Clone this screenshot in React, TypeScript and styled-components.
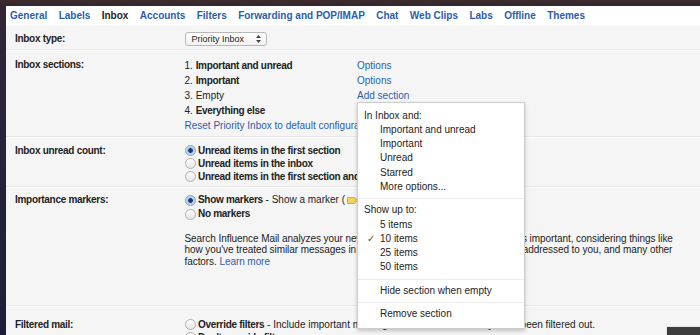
import React from 'react'
import styled, { createGlobalStyle } from 'styled-components'

const GlobalStyle = createGlobalStyle`
  html, body {
    margin: 0;
    padding: 0;
  }
  body {
    width: 700px;
    height: 335px;
    overflow: hidden;
    background: linear-gradient(180deg, #3d2b2b 0px, #332634 6px, #27233c 40%, #1d1f38 100%);
    font-family: 'Liberation Sans', Arial, sans-serif;
  }
`

const Page = styled.div`
  position: relative;
  height: 335px;
  padding: 6px 0 0 6px;
  box-sizing: border-box;
  overflow: hidden;
`

const Panel = styled.div`
  position: relative;
  height: 100%;
  background: #f5f5f5;
  font-size: 10px;
  color: #222;
`

const TabBar = styled.nav`
  display: flex;
  align-items: center;
  gap: 11.4px;
  height: 19px;
  padding-left: 4px;
  background: #fff;
`

const Tab = styled.span<{ $active?: boolean }>`
  font-weight: bold;
  white-space: nowrap;
  color: ${(p) => (p.$active ? '#222' : '#2a5db0')};
`

const Row = styled.div<{ $pt: number; $pb: number }>`
  display: grid;
  grid-template-columns: 169.5px 1fr;
  padding: ${(p) => p.$pt}px 0 ${(p) => p.$pb}px 9px;
  border-top: 1px solid #fbfbfb;
  border-bottom: 1px solid #e7e7e7;
`

const Label = styled.div`
  font-weight: bold;
  line-height: 14px;
  letter-spacing: -0.3px;
  white-space: nowrap;
`

const Strong = styled.b`
  letter-spacing: -0.3px;
`

const Select = styled.div`
  display: inline-flex;
  align-items: center;
  justify-content: space-between;
  width: 82px;
  height: 14px;
  box-sizing: border-box;
  padding: 0 5px 0 6px;
  border: 1px solid #b8b8b8;
  border-radius: 3px;
  background: linear-gradient(#fff, #f1f1f1);
  font-size: 9px;
  color: #222;
`

const SectionList = styled.div`
  display: grid;
  grid-template-columns: 172.5px auto;
  line-height: 15px;
  white-space: nowrap;
`

const Link = styled.a<{ $span?: boolean }>`
  color: #2a5db0;
  text-decoration: none;
  white-space: nowrap;
  ${(p) => (p.$span ? 'grid-column: 1 / -1;' : '')}
`

const RadioGroup = styled.div<{ $lh: number }>`
  display: flex;
  flex-direction: column;
  line-height: ${(p) => p.$lh}px;
  white-space: nowrap;
`

const RadioLine = styled.label`
  display: flex;
  align-items: center;
`

const RadioDot = styled.span<{ $checked?: boolean }>`
  flex: none;
  width: 11px;
  height: 11px;
  box-sizing: border-box;
  margin-right: 2.5px;
  border-radius: 50%;
  border: 1px solid ${(p) => (p.$checked ? '#8a9fc0' : '#b0b0b0')};
  background: ${(p) =>
    p.$checked
      ? 'radial-gradient(circle, #1c3a78 0 2px, #a9c6ec 2.6px, #e9f1fb 100%)'
      : 'linear-gradient(#fdfdfd, #e6e6e6)'};
`

const Paragraph = styled.p`
  margin: 11.75px 0 0;
  line-height: 11.5px;
  letter-spacing: -0.07px;
  white-space: nowrap;
`

const Marker = styled.svg`
  margin-left: 2px;
  vertical-align: -1px;
`

const Menu = styled.div`
  position: absolute;
  left: 351px;
  top: 96px;
  width: 168px;
  box-sizing: border-box;
  padding: 5.5px 0 6.5px;
  background: #fff;
  border: 1px solid rgba(0, 0, 0, 0.2);
  box-shadow: 0 2px 4px rgba(0, 0, 0, 0.2);
  line-height: 14.3px;
  color: #222;
`

const MenuItem = styled.div`
  display: flex;
  padding-left: 6px;
  white-space: nowrap;
`

const CheckSlot = styled.span`
  width: 16px;
  padding-left: 3px;
  box-sizing: border-box;
  color: #555;
`

const MenuSep = styled.div`
  height: 1px;
  margin: 4px 0;
  background: #ececec;
`

const ChatStub = styled.div`
  position: absolute;
  left: 666px;
  top: 326px;
  width: 40px;
  height: 20px;
  border: 1px solid #e6e6e6;
  background: #3d3d3d;
`

const SelectArrows = () => (
  <svg width="5" height="8" viewBox="0 0 5 8">
    <path d="M2.5 0 L5 3 H0 Z M2.5 8 L5 5 H0 Z" fill="#444" />
  </svg>
)

const tabs = [
  'General',
  'Labels',
  'Inbox',
  'Accounts',
  'Filters',
  'Forwarding and POP/IMAP',
  'Chat',
  'Web Clips',
  'Labs',
  'Offline',
  'Themes',
]

const sections = [
  { num: '1.', name: 'Important and unread', bold: true, link: 'Options' },
  { num: '2.', name: 'Important', bold: true, link: 'Options' },
  { num: '3.', name: 'Empty', bold: false, link: 'Add section' },
  { num: '4.', name: 'Everything else', bold: true, link: '' },
]

const filterItems = ['Important and unread', 'Important', 'Unread', 'Starred', 'More options...']
const countItems = ['5 items', '10 items', '25 items', '50 items']

const App = () => {
  return (
    <>
      <GlobalStyle />
      <Page>
        <Panel>
          <TabBar>
            {tabs.map((t) => (
              <Tab key={t} $active={t === 'Inbox'}>
                {t}
              </Tab>
            ))}
          </TabBar>

          <Row $pt={5.5} $pb={3.5}>
            <Label>Inbox type:</Label>
            <div>
              <Select>
                Priority Inbox <SelectArrows />
              </Select>
            </div>
          </Row>

          <Row $pt={6.5} $pb={3.5}>
            <Label>Inbox sections:</Label>
            <SectionList>
              {sections.map((s) => (
                <React.Fragment key={s.num}>
                  <span>
                    {s.num} {s.bold ? <Strong>{s.name}</Strong> : s.name}
                  </span>
                  <span>{s.link && <Link href="#">{s.link}</Link>}</span>
                </React.Fragment>
              ))}
              <Link href="#" $span>
                Reset Priority Inbox to default configuration
              </Link>
            </SectionList>
          </Row>

          <Row $pt={5.5} $pb={3.5}>
            <Label>Inbox unread count:</Label>
            <RadioGroup $lh={13}>
              <RadioLine>
                <RadioDot $checked />
                <Strong>Unread items in the first section</Strong>
              </RadioLine>
              <RadioLine>
                <RadioDot />
                <Strong>Unread items in the inbox</Strong>
              </RadioLine>
              <RadioLine>
                <RadioDot />
                <Strong>Unread items in the first section and the inbox</Strong>
              </RadioLine>
            </RadioGroup>
          </Row>

          <Row $pt={5} $pb={37.75}>
            <Label>Importance markers:</Label>
            <div>
              <RadioGroup $lh={14}>
                <RadioLine>
                  <RadioDot $checked />
                  <Strong>Show markers</Strong>&nbsp;- Show a marker (
                  <Marker width="11" height="7" viewBox="0 0 11 7">
                    <path d="M0.5 0.5 H7.5 L10.5 3.5 L7.5 6.5 H0.5 Z" fill="#f5d25a" stroke="#dcae2e" />
                  </Marker>
                  ) by messages
                </RadioLine>
                <RadioLine>
                  <RadioDot />
                  <Strong>No markers</Strong>
                </RadioLine>
              </RadioGroup>
              <Paragraph>
                Search Influence Mail analyzes your new incoming messages to predict what's
                important, considering things like
                <br />
                how you've treated similar messages in the past, how directly the message is
                addressed to you, and many other
                <br />
                factors. <Link href="#">Learn more</Link>
              </Paragraph>
            </div>
          </Row>

          <Row $pt={10.5} $pb={4}>
            <Label>Filtered mail:</Label>
            <RadioGroup $lh={13}>
              <RadioLine>
                <RadioDot />
                <Strong>Override filters</Strong>&nbsp;- Include important messages in the inbox
                that may have been filtered out.
              </RadioLine>
              <RadioLine>
                <RadioDot />
                <Strong>Don't override filters</Strong>
              </RadioLine>
            </RadioGroup>
          </Row>

          <Menu>
            <MenuItem>In Inbox and:</MenuItem>
            {filterItems.map((f) => (
              <MenuItem key={f}>
                <CheckSlot />
                {f}
              </MenuItem>
            ))}
            <MenuSep />
            <MenuItem>Show up to:</MenuItem>
            {countItems.map((c) => (
              <MenuItem key={c}>
                <CheckSlot>{c === '10 items' ? '✓' : ''}</CheckSlot>
                {c}
              </MenuItem>
            ))}
            <MenuSep />
            <MenuItem>
              <CheckSlot />
              Hide section when empty
            </MenuItem>
            <MenuSep />
            <MenuItem>
              <CheckSlot />
              Remove section
            </MenuItem>
          </Menu>
        </Panel>
        <ChatStub />
      </Page>
    </>
  )
}

export default App
